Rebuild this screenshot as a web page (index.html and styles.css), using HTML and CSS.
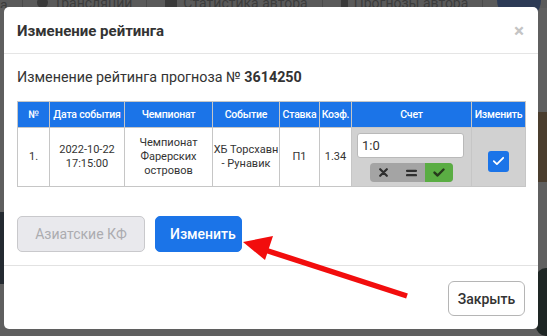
FILE: index.html
```html
<!DOCTYPE html>
<html lang="ru">
<head>
<meta charset="utf-8">
<link rel="stylesheet" href="styles.css">
</head>
<body>
<div class="page">
  <div class="nav">
    <span class="nav-item">а</span>
    <span class="sep"></span>
    <span class="nav-item"><span class="dot"></span>Трансляции</span>
    <span class="sep"></span>
    <span class="nav-item"><span class="sq"></span>Статистика автора</span>
    <span class="sep"></span>
    <span class="nav-item"><span class="person"></span>Прогнозы автора</span>
    <span class="sep"></span>
    <span class="nav-item"><span class="bubble"></span>Ко</span>
  </div>
  <div class="avatar"></div>
  <div class="left-dark"></div>
  <div class="right-photo"></div>
  <div class="right-dark"></div>
</div>

<div class="overlay">
  <div class="modal">
    <div class="modal-header">
      <div class="modal-title">Изменение рейтинга</div>
      <span class="close">×</span>
    </div>
    <div class="modal-body">
      <div class="subtitle">Изменение рейтинга прогноза № <b>3614250</b></div>
      <table class="grid">
        <colgroup>
          <col class="c-num"><col class="c-date"><col class="c-champ"><col class="c-event">
          <col class="c-bet"><col class="c-coef"><col class="c-score"><col class="c-edit">
        </colgroup>
        <thead>
          <tr>
            <th>№</th>
            <th>Дата события</th>
            <th>Чемпионат</th>
            <th>Событие</th>
            <th>Ставка</th>
            <th>Коэф.</th>
            <th>Счет</th>
            <th>Изменить</th>
          </tr>
        </thead>
        <tbody>
          <tr>
            <td>1.</td>
            <td>2022-10-22<br>17:15:00</td>
            <td>Чемпионат<br>Фарерских<br>островов</td>
            <td>ХБ Торсхавн<br>- Рунавик</td>
            <td>П1</td>
            <td>1.34</td>
            <td class="gray">
              <div class="score-box">
                <div class="score-input">1:0</div>
                <div class="seg">
                  <span class="seg-btn">
                    <svg width="9" height="9" viewBox="0 0 9 9"><path d="M1.2 1.2L7.8 7.8M7.8 1.2L1.2 7.8" stroke="#2f2f2f" stroke-width="2.2" stroke-linecap="round"/></svg>
                  </span>
                  <span class="seg-btn">
                    <svg width="11" height="8" viewBox="0 0 11 8"><path d="M1 1.8H10M1 6.2H10" stroke="#2f2f2f" stroke-width="2.2" stroke-linecap="round"/></svg>
                  </span>
                  <span class="seg-btn ok">
                    <svg width="12" height="9" viewBox="0 0 12 9"><path d="M1.5 4.6L4.6 7.5L10.5 1.5" fill="none" stroke="#263a1c" stroke-width="2.4" stroke-linecap="round" stroke-linejoin="round"/></svg>
                  </span>
                </div>
              </div>
            </td>
            <td class="gray">
              <span class="checkbox">
                <svg width="13" height="10" viewBox="0 0 13 10"><path d="M1.8 5.2L4.9 8.1L11.2 1.8" fill="none" stroke="#fff" stroke-width="1.8" stroke-linecap="round" stroke-linejoin="round"/></svg>
              </span>
            </td>
          </tr>
        </tbody>
      </table>
      <div class="actions">
        <button class="btn btn-disabled">Азиатские КФ</button>
        <button class="btn btn-primary">Изменить</button>
      </div>
    </div>
    <div class="modal-footer">
      <button class="btn btn-default">Закрыть</button>
    </div>
  </div>
  <svg class="arrow" width="547" height="336" viewBox="0 0 547 336">
    <line x1="407" y1="296" x2="262" y2="249" stroke="#f20d0d" stroke-width="5.5"/>
    <polygon points="243,242 273,236 265,260" fill="#f20d0d"/>
  </svg>
</div>
</body>
</html>
```

FILE: styles.css
```css
html, body {
  margin: 0;
  padding: 0;
}
body {
  width: 547px;
  height: 336px;
  overflow: hidden;
  position: relative;
  background: #5d5d5d;
  font-family: Roboto, "Liberation Sans", Arial, sans-serif;
  color: #333;
}
.page {
  width: 547px;
  height: 336px;
  position: relative;
  background: #5f5f5f;
}
.nav {
  height: 8px;
  overflow: hidden;
  display: flex;
  align-items: flex-end;
  font-size: 14px;
  line-height: 6px;
  color: #3c3c3c;
  white-space: nowrap;
  background: #5a5a5a;
}
.nav-item {
  display: flex;
  align-items: center;
  gap: 6px;
  line-height: 6px;
}
.sep {
  width: 1px;
  height: 8px;
  background: #4a4a4a;
  margin: 0 14px;
}
.dot {
  width: 11px; height: 11px; border-radius: 50%;
  background: #3a3a3a;
}
.sq { width: 12px; height: 10px; background: #3a3a3a; margin-left: 4px; }
.person { width: 7px; height: 10px; background: #3a3a3a; border-radius: 3px 3px 0 0; margin-left: 4px; }
.bubble { width: 12px; height: 10px; background: #3a3a3a; border-radius: 50%; margin-left: 4px; }
.avatar {
  position: absolute;
  left: 497px; top: -22px;
  width: 44px; height: 44px;
  border-radius: 50%;
  background: #2c3a55;
}
.left-dark {
  position: absolute;
  left: 0; top: 212px;
  width: 6px; height: 72px;
  background: #242a31;
}
.right-photo {
  position: absolute;
  left: 536px; top: 112px;
  width: 11px; height: 70px;
  background: #4a3d2e;
}
.right-dark {
  position: absolute;
  left: 536px; top: 268px;
  width: 11px; height: 68px;
  background: #1e2624;
  border-radius: 10px 0 0 10px;
}

.overlay {
  position: absolute;
  inset: 0;
}
.modal {
  position: absolute;
  left: 4px;
  top: 7px;
  width: 534px;
  height: 322px;
  background: #fff;
  border-radius: 5px;
  display: flex;
  flex-direction: column;
  overflow: hidden;
}
.modal-header {
  height: 46px;
  border-bottom: 1px solid #e5e5e5;
  display: flex;
  align-items: center;
  justify-content: space-between;
  padding: 0 13px 0 13px;
  flex-shrink: 0;
}
.modal-title {
  font-size: 15px;
  font-weight: 700;
  color: #333;
  margin-top: 2px;
}
.close {
  font-size: 19px;
  font-weight: 700;
  color: #c4c4c4;
  line-height: 1;
  margin-right: 1px;
  margin-top: 1px;
}
.modal-body {
  padding: 14px 13px 0 13px;
  height: 197px;
  border-bottom: 1px solid #e2e2e2;
  flex-shrink: 0;
}
.subtitle {
  font-size: 14.3px;
  line-height: 18px;
  color: #333;
}
.subtitle b { font-weight: 700; }

.grid {
  margin-top: 15px;
  width: 508px;
  border-collapse: collapse;
  table-layout: fixed;
  font-size: 11px;
  color: #333;
}
.grid th, .grid td {
  border: 1px solid #c6c6c6;
  padding: 0;
  text-align: center;
  box-sizing: border-box;
}
.grid th {
  background: #1b74e8;
  color: #fff;
  font-weight: 500;
  font-size: 10.5px;
  height: 26px;
  white-space: nowrap;
  overflow: hidden;
  letter-spacing: -0.2px;
}
.grid td {
  height: 59px;
  line-height: 14px;
  vertical-align: middle;
}
.c-num { width: 32px; }
.c-date { width: 75px; }
.c-champ { width: 88px; }
.c-event { width: 67px; }
.c-bet { width: 40px; }
.c-coef { width: 32px; }
.c-score { width: 120px; }
.c-edit { width: 54px; }
.grid td.gray {
  background: #d1d1d1;
}
.score-box {
  display: flex;
  flex-direction: column;
  align-items: center;
  gap: 5px;
  padding-top: 1px;
}
.score-input {
  width: 101px;
  height: 23px;
  background: #fff;
  border: 1px solid #b9b9b9;
  border-radius: 3px;
  font-size: 13px;
  line-height: 23px;
  text-align: left;
  padding-left: 4px;
  margin-left: -2px;
}
.seg {
  display: flex;
  width: 83px;
  height: 19px;
  border-radius: 4px;
  overflow: hidden;
  background: #a4a4a4;
}
.seg-btn {
  flex: 1;
  display: flex;
  align-items: center;
  justify-content: center;
}
.seg-btn.ok {
  background: #5aad43;
}
.checkbox {
  display: inline-flex;
  align-items: center;
  justify-content: center;
  width: 21px;
  height: 21px;
  border-radius: 3px;
  background: #1b74e8;
  margin-top: 8px;
}

.actions {
  display: flex;
  gap: 10px;
  margin-top: 29px;
}
.btn {
  font-family: Roboto, "Liberation Sans", Arial, sans-serif;
  font-size: 14px;
  height: 36px;
  border-radius: 5px;
  padding: 0 14px;
  cursor: pointer;
  box-sizing: border-box;
}
.btn-disabled {
  width: 128px;
  background: #e9e9ed;
  border: 1px solid #c9c9cc;
  color: #acacb0;
}
.btn-primary {
  width: 87px;
  background: #1b74e8;
  border: 1px solid #1b74e8;
  color: #fff;
  font-weight: 500;
}
.modal-footer {
  flex: 1;
  display: flex;
  justify-content: flex-end;
  align-items: flex-start;
  padding: 15px 13px 0 0;
}
.btn-default {
  width: 77px;
  height: 35px;
  background: #fff;
  border: 1px solid #b5b5b5;
  color: #333;
  font-weight: 500;
  border-radius: 6px;
  padding: 0;
}
.arrow {
  position: absolute;
  left: 0;
  top: 0;
  pointer-events: none;
}
```
